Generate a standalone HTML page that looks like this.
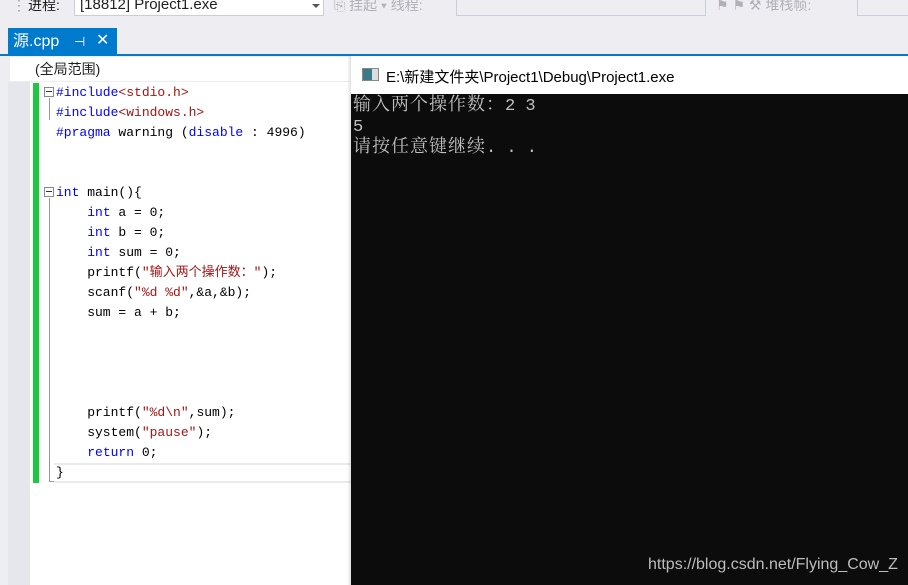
<!DOCTYPE html>
<html><head><meta charset="utf-8"><style>
*{margin:0;padding:0;box-sizing:border-box}
body{width:908px;height:585px;overflow:hidden;background:#eeeef2;position:relative;font-family:"Liberation Sans","Noto Sans CJK SC",sans-serif}
.abs{position:absolute}
.tb{font-size:14px;color:#1e1e1e;white-space:nowrap;line-height:16px}
.code{font-family:"Liberation Mono","Noto Sans CJK SC",monospace;font-size:13px;line-height:20px;white-space:pre;color:#000}
.k{color:#0000ff}.s{color:#a31515}
.con{font-family:"Liberation Mono","Noto Serif CJK SC",monospace;font-size:17px;line-height:21px;color:#c0c0c0;white-space:pre}
.cj{font-size:18px;letter-spacing:1px;line-height:16px}
</style></head><body>
<div class="abs tb" style="left:12px;top:-3px;color:#999">⋮</div>
<div class="abs tb" style="left:28px;top:-3px">进程:</div>
<div class="abs" style="left:74px;top:-2px;width:250px;height:18px;background:#fff;border:1px solid #ccd"></div>
<div class="abs tb" style="left:80px;top:-3px;font-size:15px">[18812] Project1.exe</div>
<div class="abs" style="left:312px;top:4px;width:0;height:0;border:4px solid transparent;border-top-color:#555"></div>
<div class="abs tb" style="left:334px;top:-3px;color:#b0b0b8">⎘ 挂起 ▾ 线程:</div>
<div class="abs" style="left:456px;top:-2px;width:250px;height:18px;background:#eeeef2;border:1px solid #ccd"></div>
<div class="abs tb" style="left:716px;top:-3px;color:#b0b0b8">⚑ ⚑ ⚒ 堆栈帧:</div>
<div class="abs" style="left:857px;top:-2px;width:60px;height:18px;background:#eeeef2;border:1px solid #ccd"></div>

<div class="abs" style="left:8px;top:28px;width:109px;height:27px;background:#007acc"></div>
<div class="abs" style="left:13px;top:33px;font-size:16px;line-height:18px;color:#fff">源.cpp</div>
<div class="abs" style="left:74px;top:34px;font-size:13px;line-height:15px;color:#fff">⊣</div>
<div class="abs" style="left:96px;top:32px;font-size:16px;line-height:18px;color:#fff">✕</div>
<div class="abs" style="left:0;top:54px;width:908px;height:2px;background:#007acc"></div>

<div class="abs" style="left:10px;top:57px;width:342px;height:24px;background:#fff"></div>
<div class="abs" style="left:35px;top:61px;font-size:14px;line-height:16px;color:#1e1e1e">(全局范围)</div>
<div class="abs" style="left:8px;top:82px;width:22px;height:503px;background:#e6e7ed"></div>
<div class="abs" style="left:30px;top:82px;width:322px;height:503px;background:#fff"></div>
<div class="abs" style="left:33px;top:83px;width:6px;height:400px;background:#1ec83d"></div>
<div class="abs" style="left:44px;top:87px;width:10px;height:10px;border:1px solid #888;background:#fff"></div>
<div class="abs" style="left:46px;top:91px;width:6px;height:1px;background:#333"></div>
<div class="abs" style="left:49px;top:98px;width:1px;height:22px;background:#999"></div>
<div class="abs" style="left:44px;top:187px;width:10px;height:10px;border:1px solid #888;background:#fff"></div>
<div class="abs" style="left:46px;top:191px;width:6px;height:1px;background:#333"></div>
<div class="abs" style="left:49px;top:198px;width:1px;height:284px;background:#999"></div>
<div class="abs" style="left:49px;top:481px;width:5px;height:1px;background:#999"></div>
<div class="abs" style="left:54px;top:463px;width:298px;height:20px;border-top:2px solid #eaeaea;border-bottom:2px solid #eaeaea"></div>
<div class="abs code" style="left:56px;top:83px"><span class="k">#include</span><span class="s">&lt;stdio.h&gt;</span>
<span class="k">#include</span><span class="s">&lt;windows.h&gt;</span>
<span class="k">#pragma</span> warning (<span class="k">disable</span> : 4996)


<span class="k">int</span> main(){
    <span class="k">int</span> a = 0;
    <span class="k">int</span> b = 0;
    <span class="k">int</span> sum = 0;
    printf(<span class="s">"输入两个操作数："</span>);
    scanf(<span class="s">"%d %d"</span>,&amp;a,&amp;b);
    sum = a + b;




    printf(<span class="s">"%d\n"</span>,sum);
    system(<span class="s">"pause"</span>);
    <span class="k">return</span> 0;
}</div>

<div class="abs" style="left:347px;top:56px;width:5px;height:529px;background:linear-gradient(90deg,rgba(0,0,0,0),rgba(0,0,0,.15))"></div>
<div class="abs" style="left:351px;top:56px;width:557px;height:38px;background:#fff"></div>
<div class="abs" style="left:362px;top:68px;width:17px;height:13px;border:1px solid #888;background:linear-gradient(90deg,#3a7a8a 60%,#ddd 60%)"></div>
<div class="abs" style="left:386px;top:66px;font-size:15px;color:#000">E:\新建文件夹\Project1\Debug\Project1.exe</div>
<div class="abs" style="left:351px;top:94px;width:557px;height:491px;background:#0c0c0c"></div>
<div class="abs con" style="left:353px;top:96px"><span class="cj">输入两个操作数：</span>2 3
5
<span class="cj">请按任意键继续</span>. . .</div>
<div class="abs" style="left:648px;top:556px;font-size:16px;color:#bdbdbd">https://blog.csdn.net/Flying_Cow_Z</div>
</body></html>
